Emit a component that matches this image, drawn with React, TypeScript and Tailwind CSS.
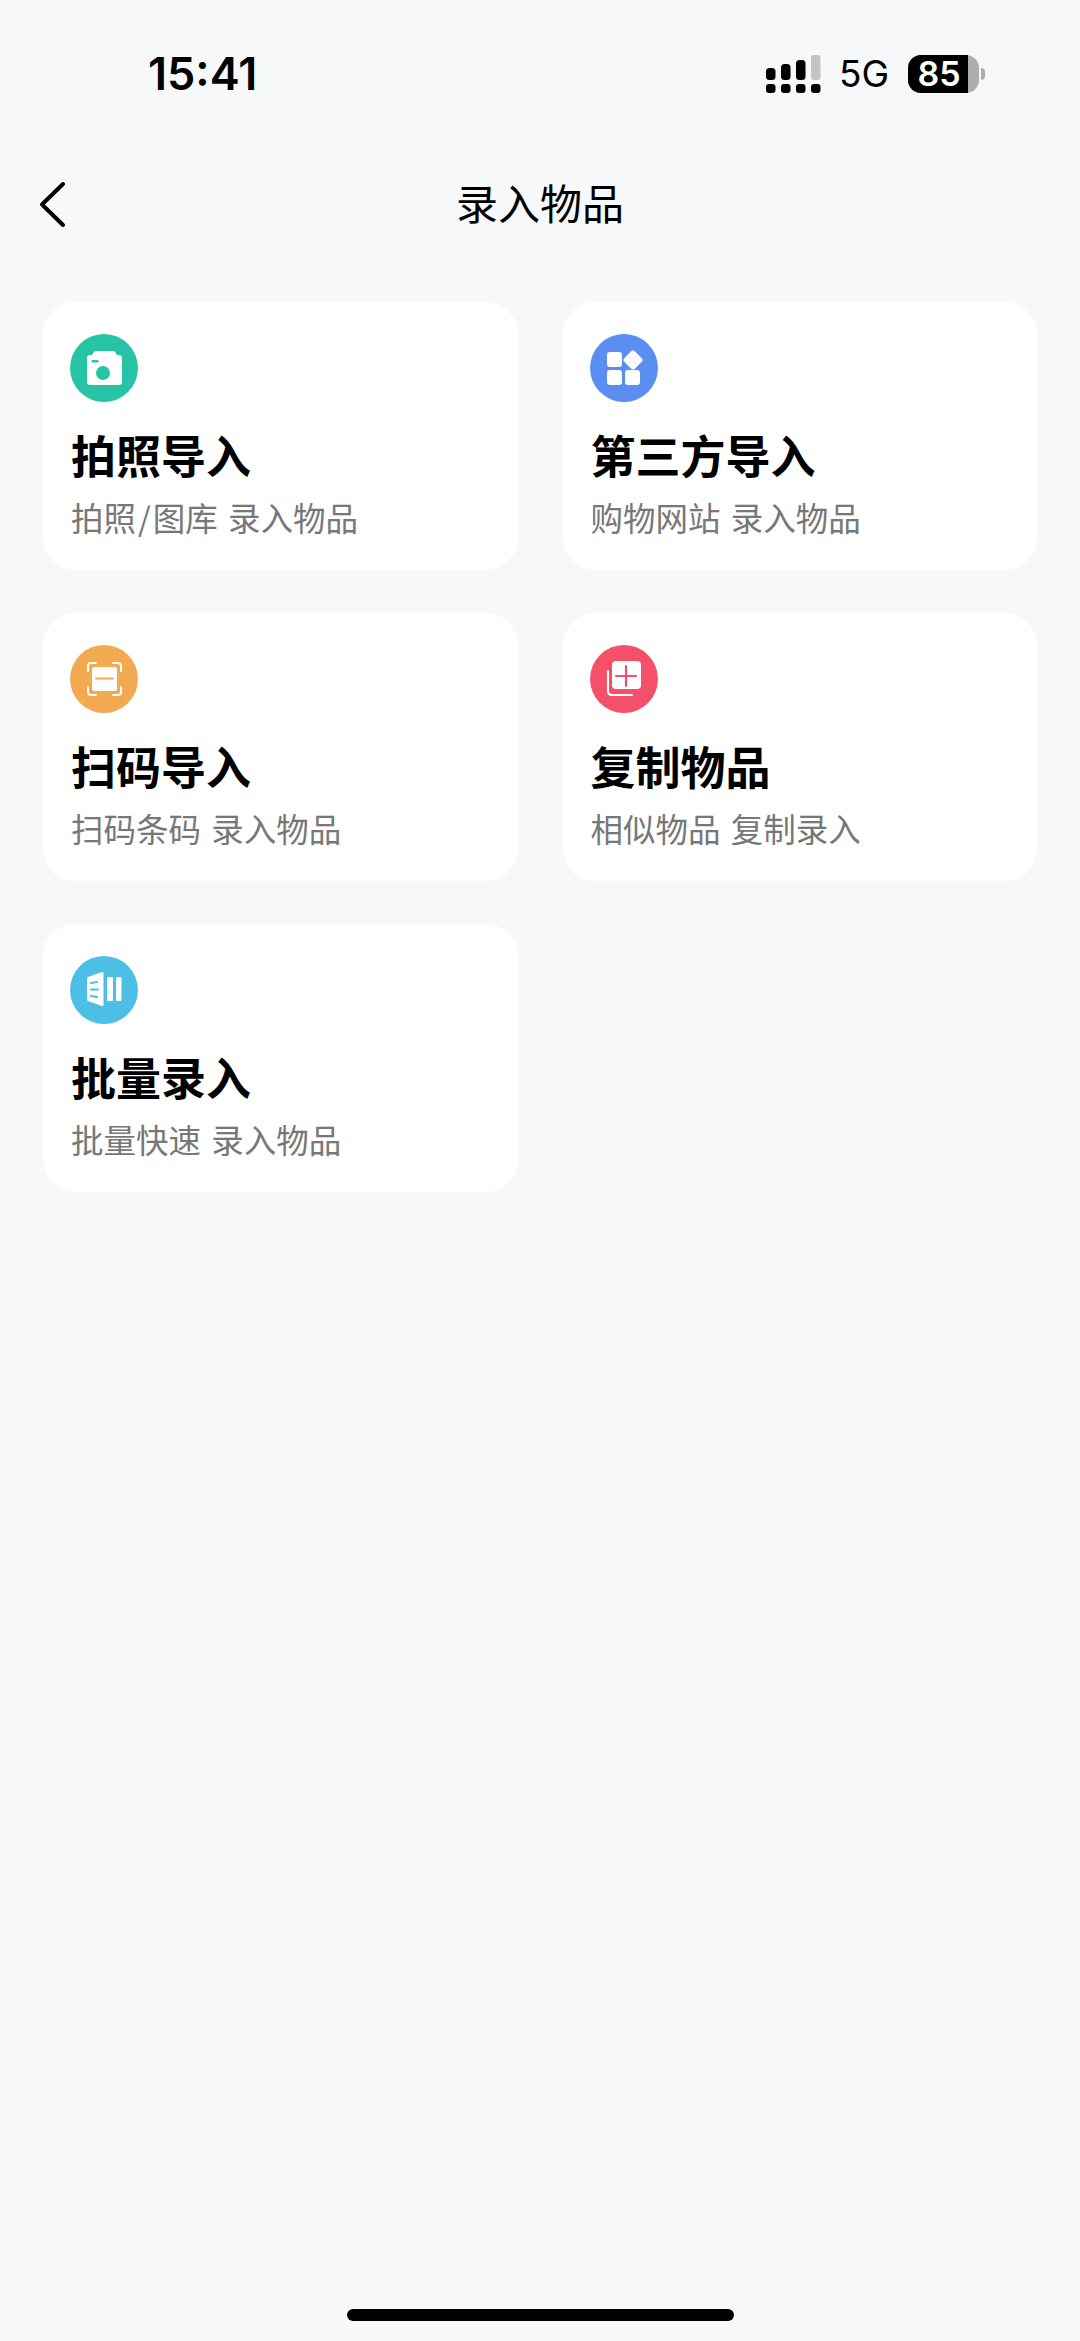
import React from "react";

const CameraIcon = () => (
    <svg width="68" height="68" viewBox="0 0 68 68">
        <path
            fill="#fff"
            d="M20 21h2l1.500-2.500q.8-1.500 2.500-1.500h17q1.700 0 2.500 1.500l1.500 2.500h2q3 0 3 3v24q0 3-3 3H20q-3 0-3-3V24q0-3 3-3z"
        />
        <circle cx="33" cy="39" r="7" fill="#26c4a5" />
        <rect x="21.500" y="26" width="7" height="2.500" rx="1.250" fill="#26c4a5" />
    </svg>
);

const AppsIcon = () => (
    <svg width="68" height="68" viewBox="0 0 68 68" fill="#fff">
        <rect x="17" y="18" width="15" height="15" rx="3" />
        <rect x="17" y="36" width="15" height="15" rx="3" />
        <rect x="35" y="36" width="15" height="15" rx="3" />
        <rect x="35.500" y="18.500" width="15" height="15" rx="3" transform="rotate(45 43 26)" />
    </svg>
);

const ScanIcon = () => (
    <svg width="68" height="68" viewBox="0 0 68 68">
        <path
            fill="none"
            stroke="#fff"
            strokeWidth="2"
            strokeLinecap="round"
            d="M18 26v-5q0-3 3-3h5M43 18h5q3 0 3 3v5M51 42v5q0 3-3 3h-5M26 50h-5q-3 0-3-3v-5"
        />
        <rect x="22" y="22" width="25" height="24" rx="2" fill="#fff" />
        <rect x="25" y="32.500" width="19" height="2" rx="1" fill="#f2a950" />
    </svg>
);

const CopyIcon = () => (
    <svg width="68" height="68" viewBox="0 0 68 68">
        <path
            fill="none"
            stroke="#fff"
            strokeWidth="2"
            strokeLinecap="round"
            d="M18 26v20q0 4 4 4h20"
        />
        <rect x="22" y="16" width="29" height="28" rx="4" fill="#fff" />
        <path stroke="#f5506a" strokeWidth="2.200" strokeLinecap="round" d="M36 21v20M26 31h20" />
    </svg>
);

const BatchIcon = () => (
    <svg width="68" height="68" viewBox="0 0 68 68">
        <path fill="#fff" d="M18 21l14-5q1.500-.3 1.500 1v32q0 1.300-1.500 1l-14-5q-1-.4-1-1.500V22.500q0-1.100 1-1.500z" />
        <path
            fill="none"
            stroke="#4bbfe6"
            strokeWidth="2"
            strokeLinecap="round"
            d="M21 27l6-1M21 33.500h7M21 40l6 1"
        />
        <rect x="37" y="21" width="6" height="24" rx="1" fill="#fff" />
        <rect x="46" y="21" width="5.500" height="24" rx="1" fill="#fff" />
    </svg>
);

const SignalIcon = () => (
    <svg width="55" height="38" viewBox="0 0 55 38">
        <rect x="0" y="13" width="9.500" height="12" rx="3.500" fill="#000" />
        <rect x="15" y="9" width="9.500" height="16" rx="3.500" fill="#000" />
        <rect x="30" y="5" width="9.500" height="20" rx="3.500" fill="#000" />
        <rect x="45" y="0" width="9.500" height="25" rx="3" fill="#c4c4c4" />
        <rect x="0" y="29" width="9.500" height="9" rx="3" fill="#000" />
        <rect x="15" y="29" width="9.500" height="9" rx="3" fill="#000" />
        <rect x="30" y="29" width="9.500" height="9" rx="3" fill="#000" />
        <rect x="45" y="29" width="9.500" height="9" rx="3" fill="#000" />
    </svg>
);

const items = [
    {
        title: "拍照导入",
        desc: (
            <>
                拍照<span className="mx-[2px]">/</span>图库 录入物品
            </>
        ),
        color: "bg-[#26c4a5]",
        icon: <CameraIcon />,
    },
    { title: "第三方导入", desc: "购物网站 录入物品", color: "bg-[#5a8ef0]", icon: <AppsIcon /> },
    { title: "扫码导入", desc: "扫码条码 录入物品", color: "bg-[#f2a950]", icon: <ScanIcon /> },
    { title: "复制物品", desc: "相似物品 复制录入", color: "bg-[#f5506a]", icon: <CopyIcon /> },
    { title: "批量录入", desc: "批量快速 录入物品", color: "bg-[#4bbfe6]", icon: <BatchIcon /> },
];

const App: React.FC = () => {
    return (
        <div className="relative flex flex-col w-[1080px] h-[2341px] overflow-hidden bg-[#f6f8fa] text-black font-['Noto_Sans_CJK_SC',sans-serif]">
            <div className="flex items-center h-[53px] mt-[47px] pl-[148px] pr-[95px]">
                <span className="text-[45px] leading-none font-semibold font-['Inter',sans-serif]">15:41</span>
                <div className="ml-auto flex items-center">
                    <SignalIcon />
                    <span className="ml-[18px] text-[37px] leading-none font-['Inter',sans-serif]">5G</span>
                    <div className="ml-[19px] flex h-[38px] w-[71px] rounded-[13px] bg-[#adadad]">
                        <div className="flex w-[60px] items-center justify-center rounded-l-[13px] bg-black pl-[2px] text-[34px] leading-none font-semibold text-white font-['Inter',sans-serif]">
                            85
                        </div>
                    </div>
                    <div className="ml-[2px] h-[12px] w-[4px] rounded-r-full bg-[#adadad]" />
                </div>
            </div>

            <div className="relative flex items-center justify-center h-[90px] mt-[59px] pb-[5px] text-[42px] leading-none">
                <svg
                    className="absolute left-[38px] top-[21px]"
                    width="30"
                    height="50"
                    viewBox="0 0 30 50"
                    fill="none"
                    stroke="#000"
                    strokeWidth="4"
                    strokeLinecap="round"
                    strokeLinejoin="round"
                >
                    <path d="M25 4 4 24.500 25 45" />
                </svg>
                录入物品
            </div>

            <div className="grid grid-cols-2 gap-x-[45px] gap-y-[43px] mt-[53px] px-[43px]">
                {items.map((item) => (
                    <div key={item.title} className="h-[268px] rounded-[32px] bg-white pt-[32px] pl-[27px]">
                        <div className={`h-[68px] w-[68px] rounded-full ${item.color}`}>{item.icon}</div>
                        <h3 className="mt-[23px] ml-[1px] text-[45px] leading-[60px] font-bold">{item.title}</h3>
                        <p className="mt-[10px] ml-[1px] text-[32.5px] leading-[44px] text-[#777777] [word-spacing:3px]">
                            {item.desc}
                        </p>
                    </div>
                ))}
            </div>

            <div className="absolute bottom-[20px] left-[347px] h-[12px] w-[387px] rounded-full bg-black" />
        </div>
    );
};

export default App;
